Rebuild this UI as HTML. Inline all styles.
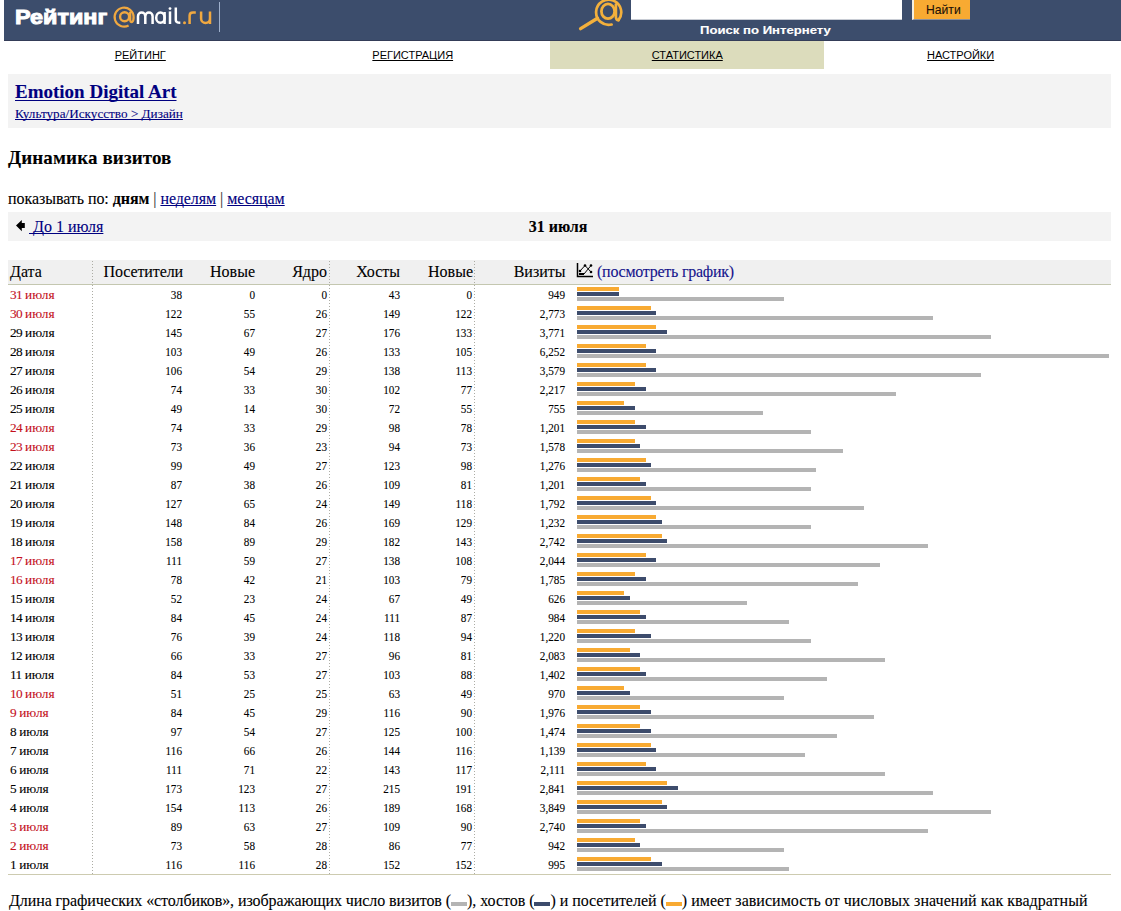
<!DOCTYPE html>
<html><head><meta charset="utf-8"><title>Рейтинг@mail.ru</title>
<style>*{margin:0;padding:0;box-sizing:border-box;text-decoration-skip-ink:none}
html,body{width:1121px;height:911px;overflow:hidden;background:#fff}
body{position:relative;font-family:"Liberation Serif",serif;color:#000;-webkit-text-stroke:0.1px currentColor}
.a{position:absolute;white-space:nowrap}
#hdr{position:absolute;left:4px;top:0;width:1117px;height:41px;background:#3c4d6c;border-bottom:1px solid #343d58}
#logo1{left:15.3px;top:3.5px;font:bold 21px/26px "Liberation Sans",sans-serif;color:#fff;-webkit-text-stroke:1px #fff;transform:scaleX(1.115);transform-origin:0 0}
#sep{position:absolute;left:219px;top:2px;width:1px;height:30px;background:#9fb0cc}
#inp{position:absolute;left:631px;top:-2px;width:271px;height:22px;background:#fff;border-bottom:1px solid #c8ccd4}
#btn{position:absolute;left:912px;top:-2px;width:58px;height:22px;background:#f8aa32;border-left:2px solid #f4efe0;border-bottom:1px solid #8a8f9c}
#btnt{left:925.5px;top:2px;font:13.5px/16px "Liberation Sans",sans-serif;color:#201008;transform:scaleX(0.9);transform-origin:0 0}
#srch{left:700px;top:24px;font:bold 10.5px/13px "Liberation Sans",sans-serif;color:#fff;transform:scaleX(1.25);transform-origin:0 0}
#tab{position:absolute;left:550px;top:41px;width:274px;height:28px;background:#dcdcbc}
.nav{top:50px;font:10px/12px "Liberation Sans",sans-serif;color:#000;text-align:center;width:274px}
.nav span{display:inline-block;text-decoration:underline;transform:scaleX(1.1);-webkit-text-stroke:0}
#box1{position:absolute;left:8px;top:74px;width:1103px;height:54px;background:#f3f3f3}
#title{left:15px;top:80.5px;text-underline-offset:1.5px;font:bold 19px/21px "Liberation Serif",serif;color:#000080;text-decoration:underline}
#cat{left:15px;top:106px;text-underline-offset:0.5px;font:13.2px/16px "Liberation Serif",serif;color:#000080;text-decoration:underline}
#h2{left:8px;top:147px;letter-spacing:0.13px;font:bold 19px/21px "Liberation Serif",serif}
#show{left:8px;top:190px;letter-spacing:-0.06px;font:16px/18px "Liberation Serif",serif}
#show a{color:#000080;text-decoration:underline}
#show .p{color:#333}
#box2{position:absolute;left:8px;top:212px;width:1103px;height:29px;background:#f3f3f3}
#arr{position:absolute;left:16px;top:220px}
#prev{left:29px;top:218px;font:16px/18px "Liberation Serif",serif;color:#000080;text-decoration:underline}
#cur{left:6.5px;width:1103px;text-align:center;top:218px;font:bold 16px/18px "Liberation Serif",serif}
#thead{position:absolute;left:8px;top:260px;width:1103px;height:24px;background:#f0f0f0}
#hline{position:absolute;left:8px;top:284px;width:1103px;height:1px;background:#c4c7b0}
#bline{position:absolute;left:8px;top:874px;width:1103px;height:1px;background:#cdcbb0}
.vd{position:absolute;top:260px;width:1px;height:614px;background:repeating-linear-gradient(to bottom,transparent 0,transparent 1px,#acaca4 1px,#acaca4 2px,transparent 2px,transparent 3px)}
.th{top:263px;font:16px/18px "Liberation Serif",serif}
.thr{text-align:right}
#graph{left:597px;top:263px;font:16px/18px "Liberation Serif",serif;color:#14148c;letter-spacing:-0.25px}
#gicon{position:absolute;left:576px;top:262px}
.row{position:absolute;left:0;height:19px;width:570px;font:13px/15px "Liberation Serif",serif}
.row>span{position:absolute;top:0;white-space:nowrap}
.dt{left:10px;font-size:13.3px}
.dd{letter-spacing:-0.75px}
.red{color:#c4101c}
.n{text-align:right;width:80px;font-size:13.5px;transform:scaleX(0.83);transform-origin:100% 0}
.c1{left:102px}.c2{left:175px}.c3{left:247px}.c4{left:320px}.c5{left:392px}.c6{left:485px}
.bo,.bn,.bg{position:absolute;left:577px;height:4px;display:block}
.bo{background:#f8aa32}
.bn{background:#3d4c6c}
.bg{background:#b4b4b4}
#foot{left:9px;top:891px;font:16px/19px "Liberation Serif",serif;letter-spacing:-0.035px}
.lg{display:inline-block;width:16px;height:4px;vertical-align:baseline;margin:0}
</style></head>
<body>
<div id="hdr"></div>
<div class="a" id="logo1">Рейтинг</div>
<svg class="a" style="left:110px;top:2px" width="105" height="30" viewBox="0 0 105 30">
<g fill="none" stroke-width="2.5">
<g stroke="#f0a840"><path d="M23.6 15 A9.5 9.5 0 1 0 18.6 23.5" stroke-width="2.2"/><circle cx="14.6" cy="14.8" r="4.5" stroke-width="2.4"/><path d="M20.2 9.8 V17.8 Q20.2 20.4 22.2 19.9 Q23.6 19 23.6 15" stroke-width="2.3"/></g>
<g stroke="#fff"><path d="M28 22 V14.25 A3.65 3.65 0 0 1 35.3 14.25 V22 M35.3 14.25 A3.65 3.65 0 0 1 42.6 14.25 V22"/>
<ellipse cx="50.4" cy="15.7" rx="4.2" ry="5.1"/><path d="M54.6 10 V22"/>
<path d="M60 9.4 V22"/><path d="M65.8 5.6 V18 Q65.8 20.8 70.3 20.8"/></g>
<g stroke="#f0a840"><path d="M79.6 22 V13.8 Q79.6 10.6 83 10.6 H85.8"/><path d="M91.1 9.4 V16.5 A4.45 4.45 0 0 0 100 16.5 M100 9.4 V22"/></g>
</g>
<circle cx="60" cy="6.6" r="1.4" fill="#fff"/><circle cx="74.5" cy="20.8" r="1.5" fill="#f0a840"/>
</svg>
<div id="sep"></div>
<svg class="a" style="left:576px;top:-4px" width="52" height="38" viewBox="0 0 52 38">
<g fill="none" stroke="#f3b03c" stroke-linecap="round">
<path d="M42.5 24.1 A12.55 12.55 0 1 0 35.6 28.5" stroke-width="2.7"/>
<ellipse cx="32" cy="15.3" rx="6.6" ry="7.4" stroke-width="2.8"/>
<path d="M39.9 8.6 V21.2 Q40.2 24.4 42.5 24.1" stroke-width="2.7"/>
<path d="M21.5 22.2 L4.6 32.6" stroke-width="3.4"/>
</g></svg>
<div id="inp"></div>
<div id="btn"></div>
<div class="a" id="btnt">Найти</div>
<div class="a" id="srch">Поиск по Интернету</div>
<div id="tab"></div>
<div class="a nav" style="left:3px"><span>РЕЙТИНГ</span></div>
<div class="a nav" style="left:276px"><span>РЕГИСТРАЦИЯ</span></div>
<div class="a nav" style="left:550px"><span>СТАТИСТИКА</span></div>
<div class="a nav" style="left:823.5px"><span>НАСТРОЙКИ</span></div>
<div id="box1"></div>
<div class="a" id="title">Emotion Digital Art</div>
<div class="a" id="cat">Культура/Искусство &gt; Дизайн</div>
<div class="a" id="h2">Динамика визитов</div>
<div class="a" id="show">показывать по: <b>дням</b> <span class="p">|</span> <a>неделям</a> <span class="p">|</span> <a>месяцам</a></div>
<div id="box2"></div>
<svg id="arr" width="10" height="12" viewBox="0 0 10 12"><path d="M0 5.6 L5.8 0 V3.1 H8.8 V7.9 H5.8 V11.2 Z" fill="#000"/></svg>
<div class="a" id="prev">&nbsp;До 1 июля</div>
<div class="a" id="cur">31 июля</div>
<div id="thead"></div>
<div id="hline"></div>
<div class="vd" style="left:92px"></div>
<div class="vd" style="left:329px"></div>
<div class="vd" style="left:474px"></div>
<div class="a th" style="left:10px">Дата</div>
<div class="a th thr" style="left:63px;width:120px;letter-spacing:-0.1px">Посетители</div>
<div class="a th thr" style="left:175px;width:80px">Новые</div>
<div class="a th thr" style="left:247px;width:80px">Ядро</div>
<div class="a th thr" style="left:320px;width:80px">Хосты</div>
<div class="a th thr" style="left:393px;width:80px">Новые</div>
<div class="a th thr" style="left:485.5px;width:80px">Визиты</div>
<svg id="gicon" width="18" height="16" viewBox="0 0 18 16">
<g fill="none" stroke="#000">
<path d="M1.5 1 V14.5 H17" stroke-width="1.5"/>
<path d="M4 9 L9 3.5 L15 10" stroke-width="1"/>
<path d="M4 12 H8 L15 3.5" stroke-width="1"/>
</g>
<g fill="#000"><circle cx="4" cy="9" r="1.3"/><circle cx="9" cy="3.5" r="1.3"/><circle cx="15" cy="10" r="1.3"/><circle cx="15" cy="3.5" r="1.3"/><rect x="3" y="11" width="5" height="2"/></g>
</svg>
<div class="a" id="graph">(посмотреть график)</div>
<div class="row" style="top:287px"><span class="dt red"><span class="dd">31</span> июля</span><span class="n c1">38</span><span class="n c2">0</span><span class="n c3">0</span><span class="n c4">43</span><span class="n c5">0</span><span class="n c6">949</span></div>
<i class="bo" style="top:287px;width:42px"></i><i class="bn" style="top:292px;width:42px"></i><i class="bg" style="top:297px;width:207px"></i>
<div class="row" style="top:306px"><span class="dt red"><span class="dd">30</span> июля</span><span class="n c1">122</span><span class="n c2">55</span><span class="n c3">26</span><span class="n c4">149</span><span class="n c5">122</span><span class="n c6">2,773</span></div>
<i class="bo" style="top:306px;width:74px"></i><i class="bn" style="top:311px;width:79px"></i><i class="bg" style="top:316px;width:356px"></i>
<div class="row" style="top:325px"><span class="dt"><span class="dd">29</span> июля</span><span class="n c1">145</span><span class="n c2">67</span><span class="n c3">27</span><span class="n c4">176</span><span class="n c5">133</span><span class="n c6">3,771</span></div>
<i class="bo" style="top:325px;width:79px"></i><i class="bn" style="top:330px;width:90px"></i><i class="bg" style="top:335px;width:414px"></i>
<div class="row" style="top:344px"><span class="dt"><span class="dd">28</span> июля</span><span class="n c1">103</span><span class="n c2">49</span><span class="n c3">26</span><span class="n c4">133</span><span class="n c5">105</span><span class="n c6">6,252</span></div>
<i class="bo" style="top:344px;width:69px"></i><i class="bn" style="top:349px;width:79px"></i><i class="bg" style="top:354px;width:532px"></i>
<div class="row" style="top:363px"><span class="dt"><span class="dd">27</span> июля</span><span class="n c1">106</span><span class="n c2">54</span><span class="n c3">29</span><span class="n c4">138</span><span class="n c5">113</span><span class="n c6">3,579</span></div>
<i class="bo" style="top:363px;width:69px"></i><i class="bn" style="top:368px;width:79px"></i><i class="bg" style="top:373px;width:404px"></i>
<div class="row" style="top:382px"><span class="dt"><span class="dd">26</span> июля</span><span class="n c1">74</span><span class="n c2">33</span><span class="n c3">30</span><span class="n c4">102</span><span class="n c5">77</span><span class="n c6">2,217</span></div>
<i class="bo" style="top:382px;width:58px"></i><i class="bn" style="top:387px;width:69px"></i><i class="bg" style="top:392px;width:319px"></i>
<div class="row" style="top:401px"><span class="dt"><span class="dd">25</span> июля</span><span class="n c1">49</span><span class="n c2">14</span><span class="n c3">30</span><span class="n c4">72</span><span class="n c5">55</span><span class="n c6">755</span></div>
<i class="bo" style="top:401px;width:47px"></i><i class="bn" style="top:406px;width:58px"></i><i class="bg" style="top:411px;width:186px"></i>
<div class="row" style="top:420px"><span class="dt red"><span class="dd">24</span> июля</span><span class="n c1">74</span><span class="n c2">33</span><span class="n c3">29</span><span class="n c4">98</span><span class="n c5">78</span><span class="n c6">1,201</span></div>
<i class="bo" style="top:420px;width:58px"></i><i class="bn" style="top:425px;width:69px"></i><i class="bg" style="top:430px;width:234px"></i>
<div class="row" style="top:439px"><span class="dt red"><span class="dd">23</span> июля</span><span class="n c1">73</span><span class="n c2">36</span><span class="n c3">23</span><span class="n c4">94</span><span class="n c5">73</span><span class="n c6">1,578</span></div>
<i class="bo" style="top:439px;width:58px"></i><i class="bn" style="top:444px;width:63px"></i><i class="bg" style="top:449px;width:266px"></i>
<div class="row" style="top:458px"><span class="dt"><span class="dd">22</span> июля</span><span class="n c1">99</span><span class="n c2">49</span><span class="n c3">27</span><span class="n c4">123</span><span class="n c5">98</span><span class="n c6">1,276</span></div>
<i class="bo" style="top:458px;width:69px"></i><i class="bn" style="top:463px;width:74px"></i><i class="bg" style="top:468px;width:239px"></i>
<div class="row" style="top:477px"><span class="dt"><span class="dd">21</span> июля</span><span class="n c1">87</span><span class="n c2">38</span><span class="n c3">26</span><span class="n c4">109</span><span class="n c5">81</span><span class="n c6">1,201</span></div>
<i class="bo" style="top:477px;width:63px"></i><i class="bn" style="top:482px;width:69px"></i><i class="bg" style="top:487px;width:234px"></i>
<div class="row" style="top:496px"><span class="dt"><span class="dd">20</span> июля</span><span class="n c1">127</span><span class="n c2">65</span><span class="n c3">24</span><span class="n c4">149</span><span class="n c5">118</span><span class="n c6">1,792</span></div>
<i class="bo" style="top:496px;width:74px"></i><i class="bn" style="top:501px;width:79px"></i><i class="bg" style="top:506px;width:287px"></i>
<div class="row" style="top:515px"><span class="dt"><span class="dd">19</span> июля</span><span class="n c1">148</span><span class="n c2">84</span><span class="n c3">26</span><span class="n c4">169</span><span class="n c5">129</span><span class="n c6">1,232</span></div>
<i class="bo" style="top:515px;width:79px"></i><i class="bn" style="top:520px;width:85px"></i><i class="bg" style="top:525px;width:234px"></i>
<div class="row" style="top:534px"><span class="dt"><span class="dd">18</span> июля</span><span class="n c1">158</span><span class="n c2">89</span><span class="n c3">29</span><span class="n c4">182</span><span class="n c5">143</span><span class="n c6">2,742</span></div>
<i class="bo" style="top:534px;width:85px"></i><i class="bn" style="top:539px;width:90px"></i><i class="bg" style="top:544px;width:351px"></i>
<div class="row" style="top:553px"><span class="dt red"><span class="dd">17</span> июля</span><span class="n c1">111</span><span class="n c2">59</span><span class="n c3">27</span><span class="n c4">138</span><span class="n c5">108</span><span class="n c6">2,044</span></div>
<i class="bo" style="top:553px;width:69px"></i><i class="bn" style="top:558px;width:79px"></i><i class="bg" style="top:563px;width:303px"></i>
<div class="row" style="top:572px"><span class="dt red"><span class="dd">16</span> июля</span><span class="n c1">78</span><span class="n c2">42</span><span class="n c3">21</span><span class="n c4">103</span><span class="n c5">79</span><span class="n c6">1,785</span></div>
<i class="bo" style="top:572px;width:58px"></i><i class="bn" style="top:577px;width:69px"></i><i class="bg" style="top:582px;width:281px"></i>
<div class="row" style="top:591px"><span class="dt"><span class="dd">15</span> июля</span><span class="n c1">52</span><span class="n c2">23</span><span class="n c3">24</span><span class="n c4">67</span><span class="n c5">49</span><span class="n c6">626</span></div>
<i class="bo" style="top:591px;width:47px"></i><i class="bn" style="top:596px;width:53px"></i><i class="bg" style="top:601px;width:170px"></i>
<div class="row" style="top:610px"><span class="dt"><span class="dd">14</span> июля</span><span class="n c1">84</span><span class="n c2">45</span><span class="n c3">24</span><span class="n c4">111</span><span class="n c5">87</span><span class="n c6">984</span></div>
<i class="bo" style="top:610px;width:63px"></i><i class="bn" style="top:615px;width:69px"></i><i class="bg" style="top:620px;width:212px"></i>
<div class="row" style="top:629px"><span class="dt"><span class="dd">13</span> июля</span><span class="n c1">76</span><span class="n c2">39</span><span class="n c3">24</span><span class="n c4">118</span><span class="n c5">94</span><span class="n c6">1,220</span></div>
<i class="bo" style="top:629px;width:58px"></i><i class="bn" style="top:634px;width:74px"></i><i class="bg" style="top:639px;width:234px"></i>
<div class="row" style="top:648px"><span class="dt"><span class="dd">12</span> июля</span><span class="n c1">66</span><span class="n c2">33</span><span class="n c3">27</span><span class="n c4">96</span><span class="n c5">81</span><span class="n c6">2,083</span></div>
<i class="bo" style="top:648px;width:53px"></i><i class="bn" style="top:653px;width:63px"></i><i class="bg" style="top:658px;width:308px"></i>
<div class="row" style="top:667px"><span class="dt"><span class="dd">11</span> июля</span><span class="n c1">84</span><span class="n c2">53</span><span class="n c3">27</span><span class="n c4">103</span><span class="n c5">88</span><span class="n c6">1,402</span></div>
<i class="bo" style="top:667px;width:63px"></i><i class="bn" style="top:672px;width:69px"></i><i class="bg" style="top:677px;width:250px"></i>
<div class="row" style="top:686px"><span class="dt red"><span class="dd">10</span> июля</span><span class="n c1">51</span><span class="n c2">25</span><span class="n c3">25</span><span class="n c4">63</span><span class="n c5">49</span><span class="n c6">970</span></div>
<i class="bo" style="top:686px;width:47px"></i><i class="bn" style="top:691px;width:53px"></i><i class="bg" style="top:696px;width:207px"></i>
<div class="row" style="top:705px"><span class="dt red"><span class="dd">9</span> июля</span><span class="n c1">84</span><span class="n c2">45</span><span class="n c3">29</span><span class="n c4">116</span><span class="n c5">90</span><span class="n c6">1,976</span></div>
<i class="bo" style="top:705px;width:63px"></i><i class="bn" style="top:710px;width:74px"></i><i class="bg" style="top:715px;width:297px"></i>
<div class="row" style="top:724px"><span class="dt"><span class="dd">8</span> июля</span><span class="n c1">97</span><span class="n c2">54</span><span class="n c3">27</span><span class="n c4">125</span><span class="n c5">100</span><span class="n c6">1,474</span></div>
<i class="bo" style="top:724px;width:63px"></i><i class="bn" style="top:729px;width:74px"></i><i class="bg" style="top:734px;width:260px"></i>
<div class="row" style="top:743px"><span class="dt"><span class="dd">7</span> июля</span><span class="n c1">116</span><span class="n c2">66</span><span class="n c3">26</span><span class="n c4">144</span><span class="n c5">116</span><span class="n c6">1,139</span></div>
<i class="bo" style="top:743px;width:74px"></i><i class="bn" style="top:748px;width:79px"></i><i class="bg" style="top:753px;width:228px"></i>
<div class="row" style="top:762px"><span class="dt"><span class="dd">6</span> июля</span><span class="n c1">111</span><span class="n c2">71</span><span class="n c3">22</span><span class="n c4">143</span><span class="n c5">117</span><span class="n c6">2,111</span></div>
<i class="bo" style="top:762px;width:69px"></i><i class="bn" style="top:767px;width:79px"></i><i class="bg" style="top:772px;width:308px"></i>
<div class="row" style="top:781px"><span class="dt"><span class="dd">5</span> июля</span><span class="n c1">173</span><span class="n c2">123</span><span class="n c3">27</span><span class="n c4">215</span><span class="n c5">191</span><span class="n c6">2,841</span></div>
<i class="bo" style="top:781px;width:90px"></i><i class="bn" style="top:786px;width:101px"></i><i class="bg" style="top:791px;width:356px"></i>
<div class="row" style="top:800px"><span class="dt"><span class="dd">4</span> июля</span><span class="n c1">154</span><span class="n c2">113</span><span class="n c3">26</span><span class="n c4">189</span><span class="n c5">168</span><span class="n c6">3,849</span></div>
<i class="bo" style="top:800px;width:85px"></i><i class="bn" style="top:805px;width:90px"></i><i class="bg" style="top:810px;width:414px"></i>
<div class="row" style="top:819px"><span class="dt red"><span class="dd">3</span> июля</span><span class="n c1">89</span><span class="n c2">63</span><span class="n c3">27</span><span class="n c4">109</span><span class="n c5">90</span><span class="n c6">2,740</span></div>
<i class="bo" style="top:819px;width:63px"></i><i class="bn" style="top:824px;width:69px"></i><i class="bg" style="top:829px;width:351px"></i>
<div class="row" style="top:838px"><span class="dt red"><span class="dd">2</span> июля</span><span class="n c1">73</span><span class="n c2">58</span><span class="n c3">28</span><span class="n c4">86</span><span class="n c5">77</span><span class="n c6">942</span></div>
<i class="bo" style="top:838px;width:58px"></i><i class="bn" style="top:843px;width:63px"></i><i class="bg" style="top:848px;width:207px"></i>
<div class="row" style="top:857px"><span class="dt"><span class="dd">1</span> июля</span><span class="n c1">116</span><span class="n c2">116</span><span class="n c3">28</span><span class="n c4">152</span><span class="n c5">152</span><span class="n c6">995</span></div>
<i class="bo" style="top:857px;width:74px"></i><i class="bn" style="top:862px;width:85px"></i><i class="bg" style="top:867px;width:212px"></i>
<div id="bline"></div>
<div class="a" id="foot"><span style="letter-spacing:-0.085px">Длина графических «столбиков», изображающих число визитов (</span><i class="lg" style="background:#b4b4b4"></i>), хостов (<i class="lg" style="background:#3d4c6c"></i>) и посетителей (<i class="lg" style="background:#f8aa32"></i><span style="letter-spacing:0.04px">) имеет зависимость от числовых значений как квадратный</span></div>
</body></html>
